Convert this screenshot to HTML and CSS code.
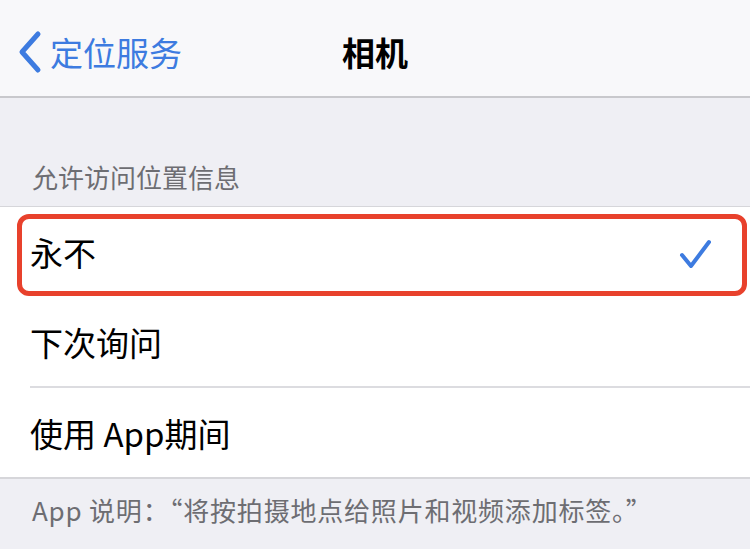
FILE: index.html
```html
<!DOCTYPE html>
<html lang="zh-CN">
<head>
    <meta charset="UTF-8">
    <meta name="viewport" content="width=device-width, initial-scale=1.0">
    <title>相机</title>
    <link rel="stylesheet" href="styles.css">
</head>
<body>

    <!-- Navigation bar -->
    <div class="nav">
        <a class="back" href="#">
            <svg class="chevron" width="28" height="44" viewBox="0 0 28 44">
                <path d="M22 4 L6 22 L22 40" fill="none" stroke="#3d7be0" stroke-width="5" stroke-linecap="round" stroke-linejoin="round"/>
            </svg>
            <span>定位服务</span>
        </a>
        <div class="title">相机</div>
        <div></div>
    </div>

    <!-- Options -->
    <div class="section-header">允许访问位置信息</div>
    <div class="group">
        <div class="row selected">
            <span>永不</span>
            <svg class="check" width="34" height="32" viewBox="0 0 34 32">
                <path d="M4 17 L13 28 L31 4" fill="none" stroke="#3d7be0" stroke-width="4" stroke-linecap="round" stroke-linejoin="round"/>
            </svg>
            <div class="highlight"></div>
        </div>
        <div class="row">
            <span>下次询问</span>
        </div>
        <div class="row">
            <span>使用 App期间</span>
        </div>
    </div>
    <div class="section-footer">App 说明：“将按拍摄地点给照片和视频添加标签。”</div>

</body>
</html>
```

FILE: styles.css
```css
body {
    margin: 0;
    background: #efeff4;
    font-family: "Noto Sans CJK SC", "Noto Sans", sans-serif;
    color: #000;
}

.nav {
    display: grid;
    grid-template-columns: 1fr auto 1fr;
    align-items: center;
    height: 88px;
    padding-top: 8px;
    background: #f8f8fa;
    border-bottom: 2px solid #c8c8cc;
}

.back {
    display: flex;
    align-items: center;
    gap: 6px;
    padding-left: 16px;
    color: #3d7be0;
    text-decoration: none;
    font-size: 33px;
}

.title {
    font-size: 33px;
    font-weight: bold;
}

.section-header {
    padding: 62px 32px 12px;
    font-size: 26px;
    line-height: 34px;
    color: #6d6d72;
    border-bottom: 1px solid #d6d6da;
}

.group {
    background: #fff;
    border-bottom: 2px solid #d6d6da;
}

.row {
    position: relative;
    display: flex;
    align-items: center;
    justify-content: space-between;
    height: 89px;
    margin-left: 30px;
    padding-right: 38px;
    font-size: 33px;
    border-bottom: 2px solid #dcdce0;
}

.row:last-child {
    border-bottom: none;
}

.row.selected {
    border-bottom: none;
    height: 90px;
}

.check {
    margin-top: 4px;
}

/* red annotation box over the first row */
.highlight {
    position: absolute;
    top: 7px;
    bottom: 1px;
    left: -13px;
    right: 3px;
    border: 5px solid #e8412c;
    border-radius: 12px;
}

.section-footer {
    padding: 14px 32px;
    font-size: 26px;
    line-height: 34px;
    letter-spacing: 0.8px;
    color: #6d6d72;
}
```
